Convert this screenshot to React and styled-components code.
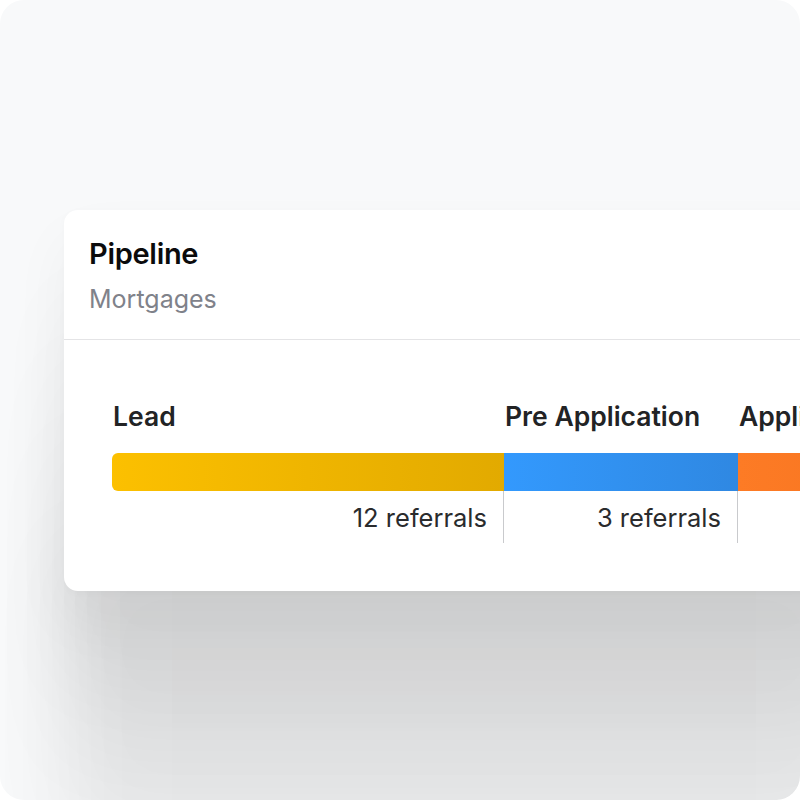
import styled, { createGlobalStyle } from "styled-components";

const GlobalStyle = createGlobalStyle`
  html, body {
    margin: 0;
    padding: 0;
    background: #ffffff;
  }
  body {
    font-family: Inter, "Noto Sans", sans-serif;
  }
`;

const stages = [
  { name: "Lead", count: "12 referrals", width: 392, from: "#fcc000", to: "#e2aa00" },
  { name: "Pre Application", count: "3 referrals", width: 234, from: "#3399fd", to: "#2f88e2" },
  { name: "Application", count: "", width: 300, from: "#fd7b25", to: "#f26f1c" },
];

const App = () => {
  return (
    <>
      <GlobalStyle />
      <Frame>
        <Card>
          <Header>
            <Title>Pipeline</Title>
            <Subtitle>Mortgages</Subtitle>
          </Header>
          <Body>
            {stages.map((s, i) => (
              <Stage key={s.name} style={{ width: s.width }}>
                <Label>{s.name}</Label>
                <Segment
                  $first={i === 0}
                  style={{ background: `linear-gradient(90deg, ${s.from}, ${s.to})` }}
                />
                <Count $line={!!s.count}>{s.count}</Count>
              </Stage>
            ))}
          </Body>
        </Card>
      </Frame>
    </>
  );
};

const Frame = styled.div`
  width: 800px;
  height: 800px;
  box-sizing: border-box;
  border-radius: 24px;
  background: #f8f9fa;
  overflow: hidden;
  padding: 210px 0 0 64px;
`;

// stacked shadows give the long soft fall-off under the card
const Card = styled.div`
  width: 800px;
  background: #ffffff;
  border-radius: 14px;
  overflow: hidden;
  box-shadow:
    0 2px 8px rgba(0, 0, 0, 0.025),
    0 30px 60px rgba(0, 0, 0, 0.045),
    0 90px 80px rgba(0, 0, 0, 0.04),
    0 160px 90px rgba(0, 0, 0, 0.04),
    0 240px 90px rgba(0, 0, 0, 0.04),
    0 330px 90px rgba(0, 0, 0, 0.045);
`;

const Header = styled.div`
  padding: 26px 25px 25px;
  border-bottom: 1px solid #e4e4e6;
  display: flex;
  flex-direction: column;
  gap: 12px;
`;

const Title = styled.h2`
  margin: 0;
  font-size: 29px;
  line-height: 36px;
  font-weight: 600;
  color: #0b0b0c;
  letter-spacing: -0.3px;
`;

const Subtitle = styled.div`
  font-size: 25px;
  line-height: 30px;
  color: #7f828a;
`;

const Body = styled.div`
  display: flex;
  padding: 60px 0 48px 48px;
`;

const Stage = styled.div`
  display: flex;
  flex-direction: column;
  flex-shrink: 0;
`;

const Label = styled.div`
  font-size: 26.5px;
  line-height: 32px;
  font-weight: 600;
  color: #222325;
  white-space: nowrap;
  padding-left: 1px;
  height: 32px;
  margin-bottom: 21px;
`;

const Segment = styled.div`
  height: 38px;
  border-radius: ${(p) => (p.$first ? "6px 0 0 6px" : "0")};
`;

const Count = styled.div`
  height: 52px;
  box-sizing: border-box;
  display: flex;
  align-items: center;
  justify-content: flex-end;
  padding-right: 16px;
  font-size: 25.5px;
  color: #2a2b2d;
  border-right: ${(p) => (p.$line ? "1px solid #c9cacd" : "none")};
`;

export default App;
